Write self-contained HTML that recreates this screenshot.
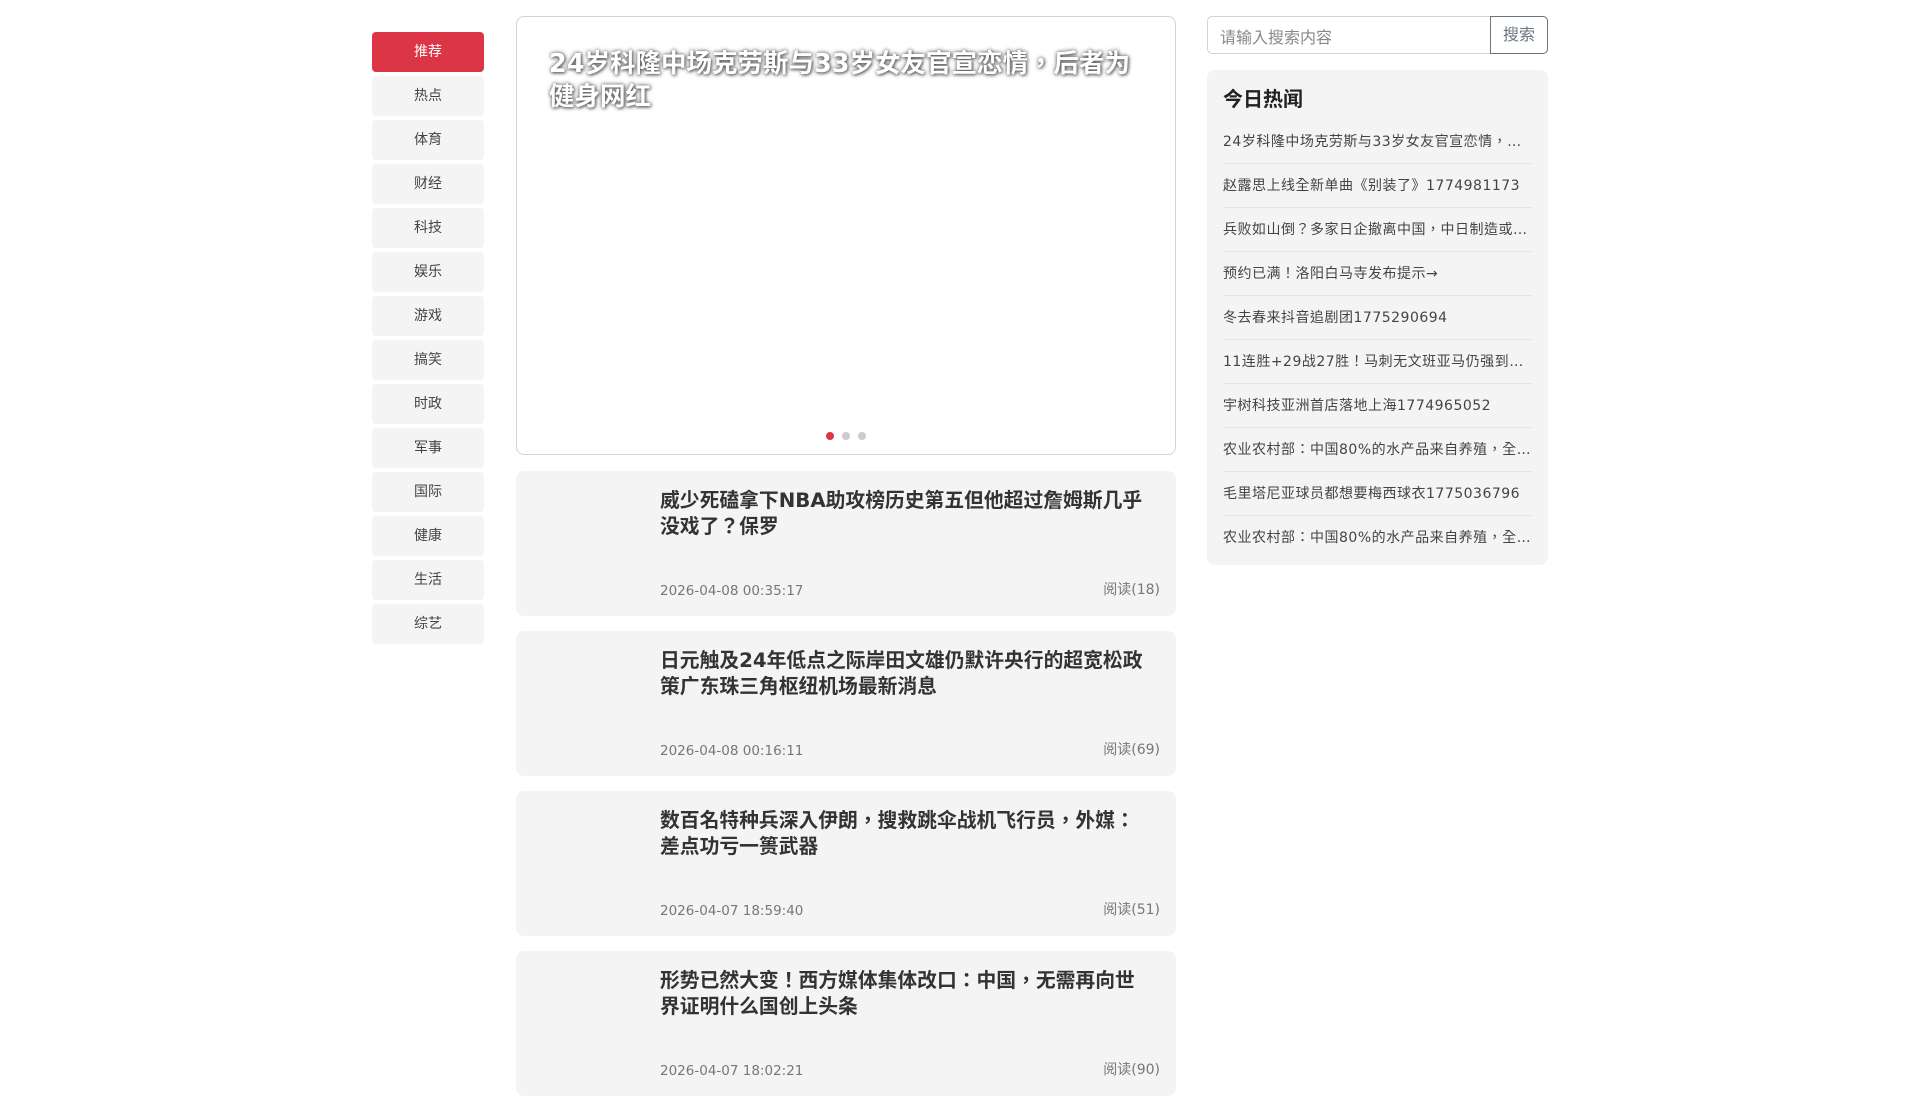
<!DOCTYPE html>
<html><head><meta charset="utf-8"><style>
*{box-sizing:border-box;margin:0;padding:0}
body{width:1920px;height:1080px;overflow:hidden;background:#fff;font-family:"DejaVu Sans","Noto Sans CJK TC",sans-serif;color:#333;position:relative}
.nav{position:absolute;left:372px;top:32px;width:112px}
.nav div{height:40px;margin-bottom:4px;background:#f4f4f4;border-radius:4px;text-align:center;line-height:41px;font-size:14px;color:#444}
.nav div.on{background:#dc3545;color:#fff}
.car{position:absolute;left:516px;top:16px;width:660px;height:439px;border:1px solid #cfd4da;border-radius:8px}
.car h2{position:absolute;left:32px;top:31px;width:600px;font-size:25.5px;line-height:33px;color:#fff;font-weight:bold;text-shadow:0 0 4px #555,1px 1px 3px #666}
.dot{position:absolute;top:415px;width:8px;height:8px;border-radius:50%;background:#ccc}
.card{position:absolute;left:516px;width:660px;height:145px;background:#f4f4f4;border-radius:8px}
.card h3{position:absolute;left:144px;top:17px;width:489px;font-size:19.8px;line-height:26px;font-weight:bold;color:#333}
.card .d{position:absolute;left:144px;bottom:17px;font-size:13.5px;color:#777}
.card .r{position:absolute;right:16px;bottom:17px;font-size:14px;color:#777}
.srch{position:absolute;left:1207px;top:16px;width:341px;height:38px;border:1px solid #ced4da;border-radius:5px}
.srch span{position:absolute;left:12px;top:7px;font-size:16px;color:#888}
.srch b{position:absolute;right:-1px;top:-1px;width:58px;height:38px;border:1px solid #6c757d;border-radius:0 5px 5px 0;font-weight:normal;font-size:16px;color:#6c757d;text-align:center;line-height:36px}
.hot{position:absolute;left:1207px;top:70px;width:341px;height:495px;background:#f4f4f4;border-radius:8px;padding:14px 16px}
.hot h4{font-size:20px;line-height:30px;margin-bottom:6px;color:#222}
.hot div{height:44px;line-height:44px;font-size:14px;letter-spacing:.5px;color:#444;border-bottom:1px solid #e4e4e4;white-space:nowrap;overflow:hidden;text-overflow:ellipsis}
.hot div:last-child{border:none}
</style></head><body>
<div class="nav"><div class="on">推荐</div><div>热点</div><div>体育</div><div>财经</div><div>科技</div><div>娱乐</div><div>游戏</div><div>搞笑</div><div>时政</div><div>军事</div><div>国际</div><div>健康</div><div>生活</div><div>综艺</div></div>
<div class="car"><h2>24岁科隆中场克劳斯与33岁女友官宣恋情，后者为健身网红</h2>
<span class="dot" style="left:309px;background:#dc3545"></span><span class="dot" style="left:325px"></span><span class="dot" style="left:341px"></span></div>
<div class="card" style="top:471px"><h3>威少死磕拿下NBA助攻榜历史第五但他超过詹姆斯几乎没戏了？保罗</h3><span class="d">2026-04-08 00:35:17</span><span class="r">阅读(18)</span></div>
<div class="card" style="top:631px"><h3>日元触及24年低点之际岸田文雄仍默许央行的超宽松政策广东珠三角枢纽机场最新消息</h3><span class="d">2026-04-08 00:16:11</span><span class="r">阅读(69)</span></div>
<div class="card" style="top:791px"><h3>数百名特种兵深入伊朗，搜救跳伞战机飞行员，外媒：差点功亏一篑武器</h3><span class="d">2026-04-07 18:59:40</span><span class="r">阅读(51)</span></div>
<div class="card" style="top:951px"><h3>形势已然大变！西方媒体集体改口：中国，无需再向世界证明什么国创上头条</h3><span class="d">2026-04-07 18:02:21</span><span class="r">阅读(90)</span></div>
<div class="srch"><span>请输入搜索内容</span><b>搜索</b></div>
<div class="hot"><h4>今日热闻</h4>
<div>24岁科隆中场克劳斯与33岁女友官宣恋情，后者为健身网红</div>
<div>赵露思上线全新单曲《别装了》1774981173</div>
<div>兵败如山倒？多家日企撤离中国，中日制造或将洗牌</div>
<div>预约已满！洛阳白马寺发布提示→</div>
<div>冬去春来抖音追剧团1775290694</div>
<div>11连胜+29战27胜！马刺无文班亚马仍强到可怕</div>
<div>宇树科技亚洲首店落地上海1774965052</div>
<div>农业农村部：中国80%的水产品来自养殖，全球第一</div>
<div>毛里塔尼亚球员都想要梅西球衣1775036796</div>
<div>农业农村部：中国80%的水产品来自养殖，全球第一</div>
</div>
</body></html>
